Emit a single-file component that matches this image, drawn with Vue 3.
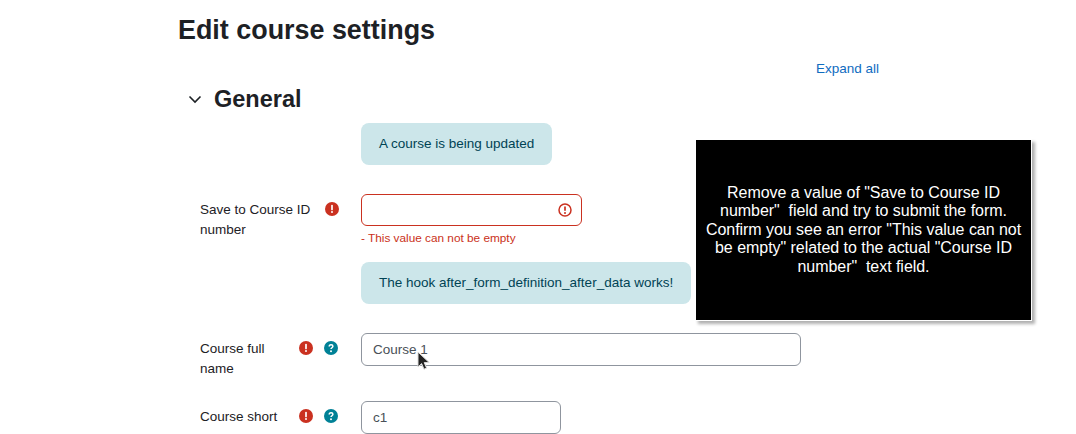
<template>
  <div class="page">
    <h2 class="title">Edit course settings</h2>
    <div class="expand-row"><a class="expand">Expand all</a></div>
    <div class="section-head">
      <svg class="chev" width="14" height="14" viewBox="0 0 14 14"><path d="M1.5 4.5 L7 10 L12.5 4.5" fill="none" stroke="#1d2125" stroke-width="1.6"/></svg>
      <h3 class="section">General</h3>
    </div>
    <div class="row notice-row first">
      <div class="label-col"></div>
      <div class="notice">A course is being updated</div>
    </div>
    <div class="row r-save">
      <div class="label-col">
        <span class="label">Save to Course ID number</span>
        <span class="icons one">
          <svg class="ic" viewBox="0 0 14 14"><circle cx="7" cy="7" r="7" fill="#ca3120"/><path d="M7 3.6v3.8" stroke="#fff" stroke-width="1.7" stroke-linecap="round"/><circle cx="7" cy="10" r="1" fill="#fff"/></svg>
        </span>
      </div>
      <div class="field">
        <div class="input invalid w-err">
          <svg class="err" viewBox="0 0 14 14"><circle cx="7" cy="7" r="6" fill="none" stroke="#ca3120" stroke-width="1.5"/><path d="M7 3.6v4.2" stroke="#ca3120" stroke-width="1.7"/><circle cx="7" cy="10" r="1" fill="#ca3120"/></svg>
        </div>
        <div class="errmsg">- This value can not be empty</div>
      </div>
    </div>
    <div class="row notice-row second">
      <div class="label-col"></div>
      <div class="notice">The hook after_form_definition_after_data works!</div>
    </div>
    <div class="row r-full">
      <div class="label-col">
        <span class="label narrow">Course full name</span>
        <span class="icons">
          <svg class="ic" viewBox="0 0 14 14"><circle cx="7" cy="7" r="7" fill="#ca3120"/><path d="M7 3.6v3.8" stroke="#fff" stroke-width="1.7" stroke-linecap="round"/><circle cx="7" cy="10" r="1" fill="#fff"/></svg>
          <svg class="ic" viewBox="0 0 14 14"><circle cx="7" cy="7" r="7" fill="#008196"/><path d="M5.2 5.6c0-1.2.8-1.9 1.9-1.9s1.8.7 1.8 1.6c0 1.4-1.9 1.5-1.9 2.8" fill="none" stroke="#fff" stroke-width="1.5"/><circle cx="7" cy="10.3" r="1" fill="#fff"/></svg>
        </span>
      </div>
      <div class="input w-full">Course 1</div>
    </div>
    <div class="row r-short">
      <div class="label-col">
        <span class="label narrow">Course short</span>
        <span class="icons">
          <svg class="ic" viewBox="0 0 14 14"><circle cx="7" cy="7" r="7" fill="#ca3120"/><path d="M7 3.6v3.8" stroke="#fff" stroke-width="1.7" stroke-linecap="round"/><circle cx="7" cy="10" r="1" fill="#fff"/></svg>
          <svg class="ic" viewBox="0 0 14 14"><circle cx="7" cy="7" r="7" fill="#008196"/><path d="M5.2 5.6c0-1.2.8-1.9 1.9-1.9s1.8.7 1.8 1.6c0 1.4-1.9 1.5-1.9 2.8" fill="none" stroke="#fff" stroke-width="1.5"/><circle cx="7" cy="10.3" r="1" fill="#fff"/></svg>
        </span>
      </div>
      <div class="input w-short">c1</div>
    </div>
    <div class="callout">Remove a value of "Save to Course ID number"&nbsp; field and try to submit the form. Confirm you see an error "This value can not be empty" related to the actual "Course ID number"&nbsp; text field.</div>
    <svg class="cursor" width="13" height="20" viewBox="0 0 13 20"><path d="M1 1v15l3.6-3.4 2.4 5.6 2.6-1.1-2.4-5.5h5z" fill="#222" stroke="#ddd" stroke-width="1"/></svg>
  </div>
</template>

<script setup>
</script>

<style>
html, body { margin: 0; background: #fff; overflow: hidden; }
</style>

<style scoped>
.page {
  position: relative;
  width: 1076px;
  height: 434px;
  overflow: hidden;
  box-sizing: border-box;
  padding: 14px 0 0 178px;
  font-family: "Liberation Sans", Arial, sans-serif;
  font-size: 13.5px;
  color: #1d2125;
}
.title { margin: 0; font-size: 26.9px; line-height: 32px; font-weight: 700; }
.expand-row { width: 701px; display: flex; justify-content: flex-end; margin-top: 15px; height: 16px; }
.expand { color: #0f6cbf; font-size: 13.5px; line-height: 16px; }
.section-head { display: flex; align-items: center; margin: 7px 0 0 10px; height: 30px; }
.chev { width: 14px; height: 14px; margin-right: 12px; }
.section { margin: 0; font-size: 23.5px; line-height: 30px; font-weight: 700; }
.row { display: flex; margin-left: 22px; }
.label-col { width: 161px; flex: none; display: flex; position: relative; }
.label { line-height: 20px; width: 118px; padding-top: 6px; }
.label.narrow { width: 90px; padding-top: 6px; }
.icons { position: absolute; top: 8px; display: flex; gap: 11px; left: 99px; }
.icons.one { left: 125px; }
.ic { width: 14px; height: 14px; display: block; }
.notice {
  background: #cce6ea;
  color: #004354;
  border-radius: 8px;
  padding: 0 18px;
  height: 42px;
  line-height: 42px;
  font-size: 13.5px;
}
.notice-row.first { margin-top: 9px; }
.r-save { margin-top: 29px; }
.input {
  box-sizing: border-box;
  border: 1px solid #8f959e;
  border-radius: 6px;
  height: 33px;
  line-height: 31px;
  padding-left: 11px;
  color: #495057;
  font-size: 13.5px;
  background: #fff;
}
.input.invalid { border-color: #ca3120; position: relative; height: 32px; }
.w-err { width: 221px; }
.w-full { width: 440px; }
.w-short { width: 200px; }
.err { position: absolute; right: 9px; top: 8px; width: 14px; height: 14px; }
.errmsg { color: #ca3120; font-size: 11.8px; line-height: 14px; margin-top: 5px; }
.notice-row.second { margin-top: 17px; }
.r-full { margin-top: 29px; }
.r-short { margin-top: 22px; }
.callout {
  position: absolute;
  left: 696px;
  top: 140px;
  width: 335px;
  height: 180px;
  box-sizing: border-box;
  padding: 0 6px;
  background: #000;
  color: #fff;
  font-size: 16px;
  line-height: 18.4px;
  letter-spacing: -0.04px;
  text-align: center;
  display: flex;
  align-items: center;
  justify-content: center;
  box-shadow: 0 0 0 1px #fff, 3px 3px 3px 1px #b0b0b0;
}
.cursor { position: absolute; left: 417px; top: 351px; }
</style>
